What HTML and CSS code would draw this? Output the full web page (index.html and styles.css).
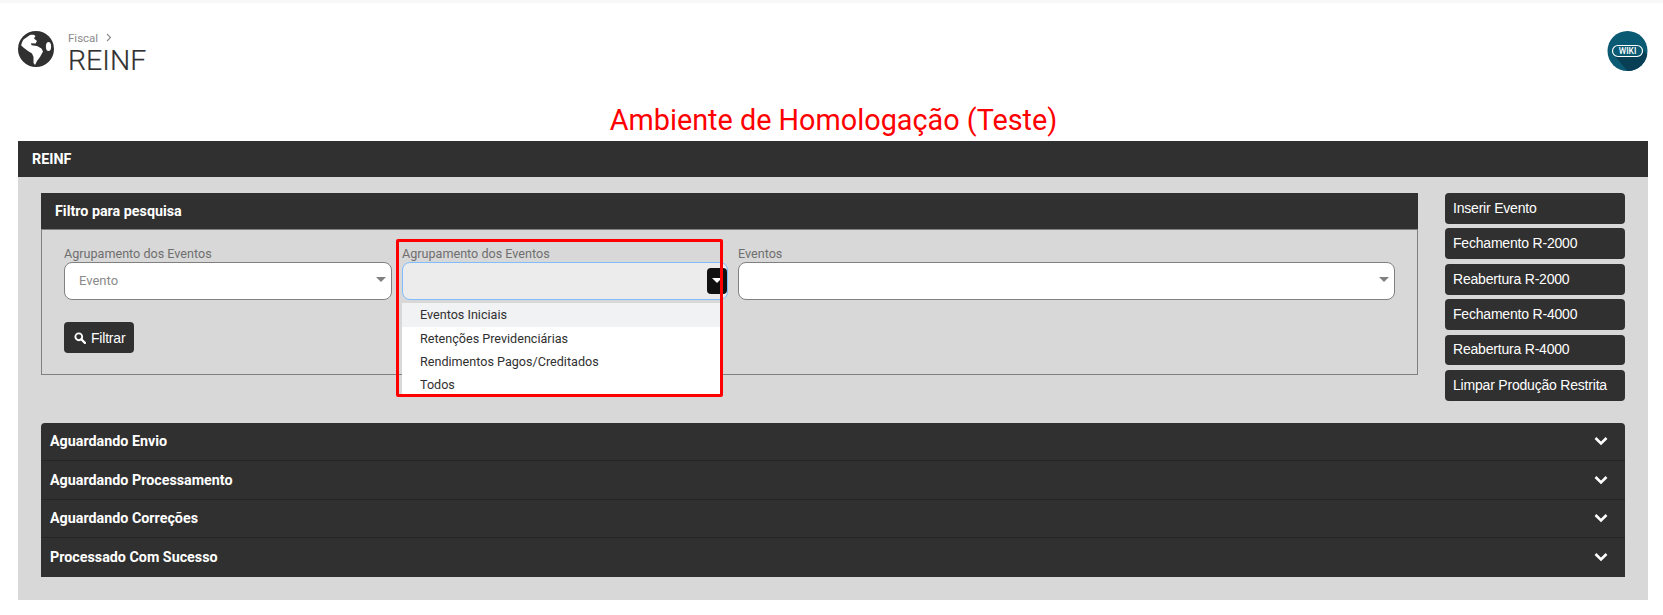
FILE: index.html
```html
<!DOCTYPE html>
<html lang="pt-BR">
<head>
<meta charset="utf-8">
<title>REINF</title>
<link rel="stylesheet" href="styles.css">
</head>
<body>
<div class="topstrip"></div>
<header class="pagehead">
  <svg class="globe" viewBox="0 0 36 36" aria-hidden="true">
    <circle cx="18" cy="18" r="18" fill="#303030"/>
    <path fill="#fff" d="M12 4C14 3.400 16.500 3.600 17.500 5L16 7.500L19 10L17.500 12.500L13 12.200L13.500 14.200L19 15L23.500 17.500L25 20.500L22 26L19 30L17 34L15.500 32L15.500 26L14 22.500L10 20L6 17L3.200 14.500C3.500 12 4.500 10 5.500 8.500Z"/>
    <ellipse cx="30.500" cy="15.500" rx="2.600" ry="4.500" fill="#fff"/>
  </svg>
  <div class="pagehead-text">
    <div class="crumb">Fiscal
      <svg class="crumb-sep" viewBox="0 0 6 9" aria-hidden="true"><path d="M1 1l3.500 3.500L1 8" fill="none" stroke="#8a8a8a" stroke-width="1.100"/></svg>
    </div>
    <h1 class="pagetitle">REINF</h1>
  </div>
  <svg class="wiki" viewBox="0 0 41 40" role="img" aria-label="Wiki">
    <defs><clipPath id="wikiclip"><circle cx="20.500" cy="20" r="20"/></clipPath></defs>
    <circle cx="20.500" cy="20" r="20" fill="#0b5a74"/>
    <path clip-path="url(#wikiclip)" fill="#083f54" d="M7 24L34 24L36 19L46 30L30 46L22 42Z"/>
    <rect x="5.500" y="14.500" width="30" height="11" rx="5.500" fill="#0b5a74" stroke="#fff" stroke-width="1.200"/>
    <text x="20.500" y="23.300" class="wiki-text" text-anchor="middle">WIKI</text>
  </svg>
</header>
<div class="envnote">Ambiente de Homologação (Teste)</div>
<main class="panel">
  <div class="panel-head">REINF</div>
  <div class="panel-body">
    <div class="toprow">
      <section class="filter">
        <div class="filter-head">Filtro para pesquisa</div>
        <div class="filter-body">
          <div class="fields">
            <div class="field field-a">
              <label class="field-label">Agrupamento dos Eventos</label>
              <div class="select"><span class="select-value">Evento</span><span class="caret"></span></div>
            </div>
            <div class="field field-b">
              <label class="field-label">Agrupamento dos Eventos</label>
              <div class="select select-open"><span class="caret-box"><span class="caret caret-white"></span></span></div>
              <ul class="menu">
                <li class="menu-item menu-item-active">Eventos Iniciais</li>
                <li class="menu-item">Retenções Previdenciárias</li>
                <li class="menu-item">Rendimentos Pagos/Creditados</li>
                <li class="menu-item">Todos</li>
              </ul>
              <div class="redbox"></div>
            </div>
            <div class="field field-c">
              <label class="field-label">Eventos</label>
              <div class="select"><span class="caret"></span></div>
            </div>
          </div>
          <button class="btn btn-filter" type="button">
            <svg class="search" viewBox="0 0 13 13" aria-hidden="true"><circle cx="5.200" cy="5.200" r="3.700" fill="none" stroke="#fff" stroke-width="2"/><path d="M8 8l3.800 3.800" stroke="#fff" stroke-width="2.400" stroke-linecap="round"/></svg>
            Filtrar
          </button>
        </div>
      </section>
      <aside class="actions">
        <button class="btn btn-action" type="button">Inserir Evento</button>
        <button class="btn btn-action" type="button">Fechamento R-2000</button>
        <button class="btn btn-action" type="button">Reabertura R-2000</button>
        <button class="btn btn-action" type="button">Fechamento R-4000</button>
        <button class="btn btn-action" type="button">Reabertura R-4000</button>
        <button class="btn btn-action" type="button">Limpar Produção Restrita</button>
      </aside>
    </div>
    <div class="accordion">
      <div class="acc-row"><span>Aguardando Envio</span><svg class="chev" viewBox="0 0 14 10" aria-hidden="true"><path d="M1.500 2l5.500 5.500L12.500 2" fill="none" stroke="#fff" stroke-width="2.600"/></svg></div>
      <div class="acc-row"><span>Aguardando Processamento</span><svg class="chev" viewBox="0 0 14 10" aria-hidden="true"><path d="M1.500 2l5.500 5.500L12.500 2" fill="none" stroke="#fff" stroke-width="2.600"/></svg></div>
      <div class="acc-row"><span>Aguardando Correções</span><svg class="chev" viewBox="0 0 14 10" aria-hidden="true"><path d="M1.500 2l5.500 5.500L12.500 2" fill="none" stroke="#fff" stroke-width="2.600"/></svg></div>
      <div class="acc-row"><span>Processado Com Sucesso</span><svg class="chev" viewBox="0 0 14 10" aria-hidden="true"><path d="M1.500 2l5.500 5.500L12.500 2" fill="none" stroke="#fff" stroke-width="2.600"/></svg></div>
    </div>
  </div>
</main>
</body>
</html>
```
FILE: styles.css
```css
* { box-sizing: border-box; }
html, body { margin: 0; padding: 0; }
body {
  background: #fff;
  font-family: Roboto, "Liberation Sans", sans-serif;
  color: #303030;
  height: 615px;
  overflow: hidden;
}
.topstrip { height: 3px; background: #f8f8f8; }
.pagehead {
  display: flex;
  align-items: flex-start;
  padding: 28px 15px 0 18px;
  height: 97px;
}
.globe { width: 36px; height: 36px; flex: none; }
.pagehead-text { margin-left: 14px; flex: 1; }
.crumb { font-size: 11.500px; line-height: 14px; color: #8a8a8a; }
.crumb-sep { width: 6px; height: 9px; margin-left: 5px; }
.pagetitle { margin: 0; font-size: 28.500px; line-height: 32px; font-weight: 300; color: #303030; -webkit-text-stroke: 0.2px #303030; }
.wiki { width: 41px; height: 40px; flex: none; }
.wiki-text { font-family: Roboto, sans-serif; font-size: 8.500px; font-weight: 500; fill: #fff; }
.envnote {
  height: 41px;
  padding-left: 4px;
  text-align: center;
  color: #ff0000;
  font-size: 28.800px;
  line-height: 40px;
}
.panel { margin: 0 15px 0 18px; background: #d8d8d8; height: 459px; }
.panel-head {
  background: #303030;
  color: #fff;
  font-size: 14.300px;
  font-weight: 700;
  height: 36px;
  line-height: 36px;
  padding-left: 14px;
}
.panel-body { padding: 16px 23px 0; }
.toprow { display: flex; gap: 27px; align-items: flex-start; }
.filter { flex: 1; min-width: 0; }
.filter-head {
  background: #303030;
  color: #fff;
  font-size: 14.300px;
  font-weight: 700;
  height: 36px;
  line-height: 36px;
  padding-left: 14px;
}
.filter-body {
  border: 1px solid #808080;
  height: 146px;
  padding: 16px 22px 0;
}
.fields { display: flex; gap: 10px; }
.field { position: relative; }
.field-a { width: 328px; }
.field-b { width: 326px; }
.field-c { flex: 1; }
.field-label {
  display: block;
  font-size: 12.600px;
  line-height: 16px;
  color: #6f6f6f;
}
.select {
  position: relative;
  height: 38px;
  background: #fff;
  border: 1px solid #808080;
  border-radius: 8px;
  padding-left: 14px;
  font-size: 13px;
  line-height: 36px;
  color: #8a8a8a;
}
.select-open {
  background: #ececec;
  border-color: #80bdff;
}
.caret {
  position: absolute;
  right: 5px;
  top: 14px;
  width: 0;
  height: 0;
  border-left: 5px solid transparent;
  border-right: 5px solid transparent;
  border-top: 5px solid #808080;
}
.caret-box {
  position: absolute;
  right: 0;
  top: 5px;
  width: 20px;
  height: 26px;
  border-radius: 4px;
  background: #111;
}
.caret-white { border-top-color: #fff; right: 5px; top: 10px; }
.menu {
  position: absolute;
  left: 0;
  top: 57px;
  width: 320px;
  height: 94px;
  margin: 0;
  padding: 0;
  list-style: none;
  background: #fff;
  overflow: hidden;
  z-index: 2;
}
.menu-item {
  height: 23px;
  line-height: 23px;
  padding-left: 18px;
  font-size: 12.600px;
  color: #303030;
}
.menu-item-active { height: 24px; line-height: 24px; background: #f1f2f4; }
.redbox {
  position: absolute;
  left: -6px;
  top: -7px;
  width: 327px;
  height: 158px;
  border: 3px solid #ff0000;
  border-radius: 2px;
  z-index: 3;
  pointer-events: none;
}
.btn {
  display: block;
  background: #303030;
  color: #fff;
  border: 0;
  border-radius: 4px;
  font-family: "Liberation Sans", Arial, sans-serif;
  font-size: 14px;
  letter-spacing: -0.200px;
}
.btn-filter {
  display: flex;
  align-items: center;
  gap: 5px;
  margin-top: 22px;
  width: 70px;
  height: 31px;
  padding: 0 0 0 10px;
}
.search { width: 12px; height: 12px; }
.actions { width: 180px; flex: none; display: flex; flex-direction: column; gap: 4.600px; }
.btn-action { height: 30.800px; width: 100%; text-align: left; padding: 0 0 1px 8px; white-space: nowrap; }
.accordion { margin-top: 22px; background: #303030; border-radius: 4px 4px 0 0; height: 154px; }
.acc-row {
  display: flex;
  justify-content: space-between;
  align-items: center;
  height: 38.500px;
  padding: 0 17px 1px 9px;
  color: #fff;
  font-size: 14.300px;
  font-weight: 700;
  border-bottom: 1px solid #262626;
}
.acc-row:last-child { border-bottom: 0; }
.chev { width: 14px; height: 10px; }
```
